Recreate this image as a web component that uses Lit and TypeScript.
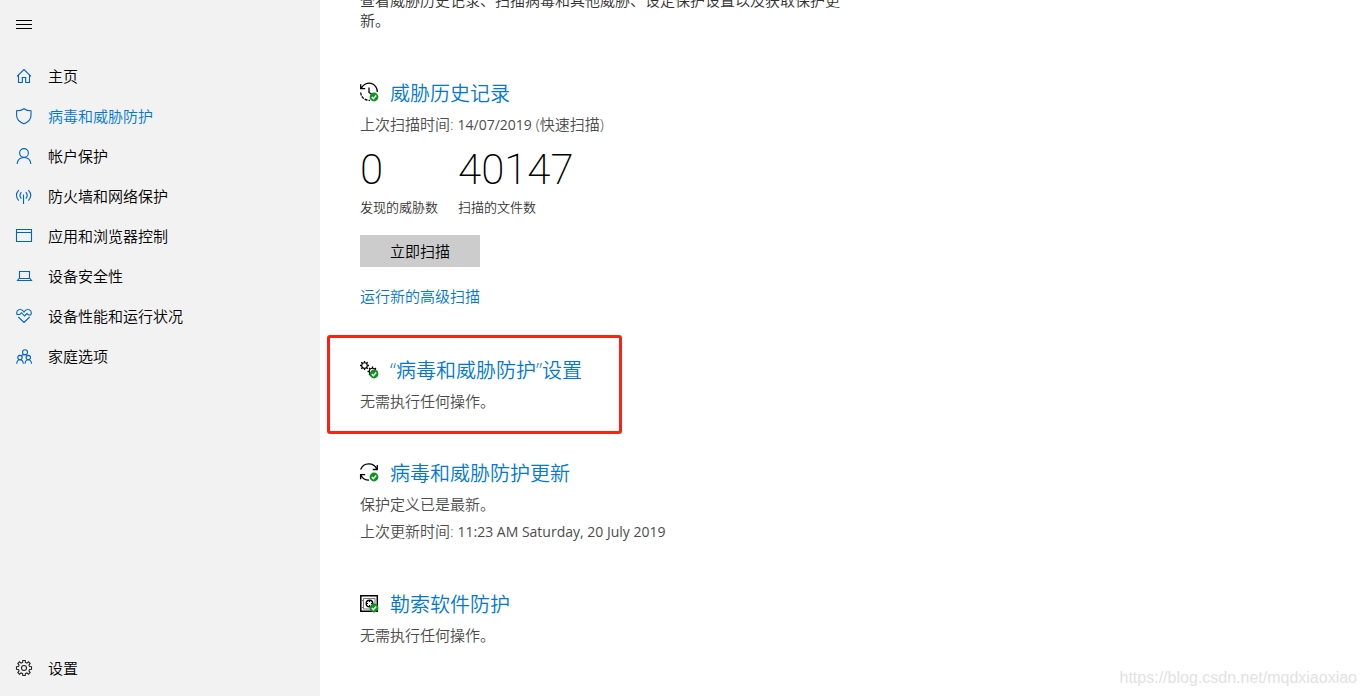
import { LitElement, html, css, svg, SVGTemplateResult } from "lit";
import { customElement, property, state } from "lit/decorators.js";

const cog = (cx: number, cy: number, r: number, teeth: number, depth: number): string => {
  const points: string[] = [];
  const step = (Math.PI * 2) / teeth;
  for (let i = 0; i < teeth; i++) {
    const a = i * step - Math.PI / 2;
    const corners: [number, number][] = [
      [-0.32, r - depth],
      [-0.2, r],
      [0.2, r],
      [0.32, r - depth],
    ];
    for (const [k, radius] of corners) {
      const t = a + k * step;
      points.push(`${(cx + Math.cos(t) * radius).toFixed(2)} ${(cy + Math.sin(t) * radius).toFixed(2)}`);
    }
  }
  return `M${points.join("L")}Z`;
};

const badge = svg`
  <circle cx="14" cy="14" r="4.400" fill="#0c9420" stroke="none"/>
  <path d="M11.800 14.100l1.600 1.600 2.800-3.200" stroke="#fff" stroke-width="1.400"/>`;

const spokes = (cx: number, cy: number, inner: number, outer: number): string => {
  let d = "";
  for (let i = 0; i < 8; i++) {
    const t = (i * Math.PI) / 4;
    d += `M${cx + Math.cos(t) * inner} ${cy + Math.sin(t) * inner}L${cx + Math.cos(t) * outer} ${cy + Math.sin(t) * outer}`;
  }
  return d;
};

const icons: Record<string, SVGTemplateResult> = {
  menu: svg`<path d="M0 4.500h16M0 8.500h16M0 12.500h16"/>`,
  home: svg`<path d="M1 8.300L8 1.600l7 6.700M2.500 7v7.500h3.800V9.500h3.400v5h3.800V7"/>`,
  shield: svg`<path d="M8 .7c2 1.500 4.500 2.100 7 2.100v4.400c0 4-2.800 6.800-7 8.600C3.300 14 .6 11.200.6 7.200V2.800C3.400 2.800 6 2.200 8 .7z"/>`,
  person: svg`<circle cx="8" cy="5" r="4.400"/><path d="M1.100 16c.4-4 3.200-6.500 6.900-6.500s6.500 2.500 6.900 6.500"/>`,
  signal: svg`<path d="M7.500 6.500V16M5.400 4.200c-1.800 2.100-1.800 4.500 0 6.500M9.800 4.200c1.800 2.100 1.800 4.500 0 6.500M2.800 2.200c-3 3.300-3 7.200 0 10.500M12.400 2.200c3 3.300 3 7.200 0 10.500"/>`,
  window: svg`<path d="M.5 1.500h15v12H.5zM.5 4.500h15"/>`,
  laptop: svg`<path d="M3.500 3.500h10v7h-10zM3 10.500l-1.500 2h14l-1.500-2"/>`,
  heart: svg`<path d="M1.200 7C-.2 3.900 1.600 1.500 4.200 1.500 6 1.500 7.200 2.500 8 4c.8-1.500 2-2.500 3.800-2.500 2.600 0 4.400 2.400 3 5.500M.5 6.500h3.300l1.700-1.800 3 3.300L11 5.600l1.500 1.400H15M2.300 9L8 14.500 13.700 9"/>`,
  family: svg`<circle cx="9" cy="4.200" r="2.500"/><circle cx="4" cy="9.600" r="2.200"/><circle cx="12.300" cy="9.600" r="2.200"/><path d="M.7 15.800c.2-2.500 1.500-4 3.300-4s3.100 1.500 3.400 4M9 15.800c.2-2.500 1.500-4 3.300-4s3 1.500 3.200 4M5.300 7.900C6 6.700 7.300 6.500 9 6.700s2.500.4 3 1.200"/>`,
  gear: svg`<path d="${cog(8, 8, 7.6, 8, 1.9)}"/><circle cx="8" cy="8" r="2.500"/>`,
  history: svg`<g stroke="#000" stroke-width="1.300"><path d="M1.500 5A8.300 8.300 0 0 1 17.300 9M.7 1.200v4.500h4.500M9 4.500v5l3 2"/><path d="M.7 9.500A8.300 8.300 0 0 0 10 17.300" stroke-dasharray="3 1"/></g>${badge}`,
  cogs: svg`<g stroke="#000"><circle cx="4.500" cy="5.500" r="2.800"/><path d="${spokes(4.5, 5.5, 2.8, 4.5)}" stroke-width="1.300"/><circle cx="12.500" cy="11.500" r="3.200"/><path d="${spokes(12.5, 11.5, 3.2, 4.9)}" stroke-width="1.300"/></g>${badge}`,
  sync: svg`<g stroke="#000" stroke-width="1.300"><path d="M.6 6.500C2 3 5 .8 8.700.8c3.500 0 6.600 2 8 5M17.300 2v4.500h-4.500M9 17.200c-3.500 0-6.600-2-8-5M.6 16.200v-4.500h4.500"/></g>${badge}`,
  safe: svg`<path d="M.8 1.800h16.500v15.500H.8z" stroke="#000" stroke-width="1.500"/><path d="M3.500 4.500h11.500v10.500H3.500zM2 6.500h1.500M2 13.500h1.500" stroke="#777" stroke-width="1"/><circle cx="9.500" cy="9.500" r="3.300" stroke="#000" stroke-width="1.400"/><path d="M9.500 6.500v1.500M9.500 11v1.500M6.500 9.500h1.500M11 9.500h1.500" stroke="#000" stroke-width="1"/>${badge}`,
};

@customElement("ui-icon")
class UiIcon extends LitElement {
  @property() name = "";
  @property({ type: Number }) box = 16;

  static styles = css`
    :host { display: block; flex: none; width: 16px; height: 16px; }
    :host([box="20"]) { width: 20px; height: 20px; }
    svg { display: block; width: 100%; height: 100%; fill: none; stroke: currentColor; stroke-width: 1.1; overflow: visible; }
  `;

  render() {
    return html`<svg viewBox="0 0 ${this.box} ${this.box}" aria-hidden="true">${icons[this.name]}</svg>`;
  }
}

@customElement("app-root")
class AppRoot extends LitElement {
  @state() private current = "shield";

  private nav = [
    ["home", "主页"],
    ["shield", "病毒和威胁防护"],
    ["person", "帐户保护"],
    ["signal", "防火墙和网络保护"],
    ["window", "应用和浏览器控制"],
    ["laptop", "设备安全性"],
    ["heart", "设备性能和运行状况"],
    ["family", "家庭选项"],
  ];

  static styles = css`
    :host {
      display: grid;
      grid-template-columns: 320px 1fr;
      height: 100vh;
      overflow: hidden;
      position: relative;
      background: #fff;
      color: #000;
      font: 350 15px/20px "Open Sans", "Noto Sans CJK SC", sans-serif;
    }
    a { color: #0078d7; text-decoration: none; }
    p, h2, dl, dd { margin: 0; }
    button { border: 0; font: inherit; color: inherit; cursor: pointer; }
    .side { display: flex; flex-direction: column; background: #f2f2f2; padding-bottom: 8px; }
    .menu { display: flex; align-items: center; width: 48px; height: 48px; padding: 0 16px; background: none; }
    .nav { display: flex; flex-direction: column; padding-top: 8px; flex: 1; }
    .item { display: flex; align-items: center; gap: 16px; height: 40px; padding: 0 16px; color: #000; }
    .item ui-icon { color: #0063c7; }
    .item.on { color: #0078d7; }
    .item.last ui-icon { color: #222; }
    .main { display: flex; flex-direction: column; gap: 48px; padding: 0 40px; color: #4c4c4c; }
    .intro { max-width: 480px; margin-top: -10px; padding-bottom: 1px; color: #333; }
    .card { display: flex; flex-direction: column; align-items: flex-start; gap: 7px; position: relative; }
    .title { display: flex; align-items: flex-start; gap: 10px; margin-bottom: -2px; font-size: 20px; line-height: 30px; font-weight: inherit; }
    .title ui-icon { color: #000; margin-top: 4px; }
    .latin { font-size: 14px; font-weight: 400; }
    .stats { display: flex; gap: 20px; padding: 6px 0 11px; }
    .stat { display: flex; flex-direction: column-reverse; gap: 5px; }
    .stat dt { font-size: 13px; color: #333; }
    .stat dd { font: 200 42px/44px Roboto, sans-serif; color: #000; }
    .scan { width: 120px; height: 32px; padding: 0; background: #ccc; color: #000; }
    .advanced { margin: 12px 0 2px; }
    .marked::after {
      content: "";
      position: absolute;
      inset: -21px auto -23px -33px;
      width: 289px;
      border: 3px solid #fc2115;
      border-radius: 3px;
      pointer-events: none;
    }
    .mark { position: absolute; right: 9px; bottom: 8px; font: 16px/20px "Liberation Sans", sans-serif; color: #e2e2e2; }
  `;

  private heading(icon: string, text: string) {
    return html`<h2 class="title"><ui-icon name=${icon} box="20"></ui-icon><a href="#">${text}</a></h2>`;
  }

  render() {
    return html`
      <aside class="side">
        <button class="menu" aria-label="菜单"><ui-icon name="menu"></ui-icon></button>
        <nav class="nav">
          ${this.nav.map(
            ([id, label]) => html`<a href="#" class="item ${id === this.current ? "on" : ""}" @click=${() => (this.current = id)}
              ><ui-icon name=${id}></ui-icon>${label}</a>`
          )}
        </nav>
        <a href="#" class="item last"><ui-icon name="gear"></ui-icon>设置</a>
      </aside>
      <main class="main">
        <p class="intro">查看威胁历史记录、扫描病毒和其他威胁、设定保护设置以及获取保护更新。</p>
        <section class="card">
          ${this.heading("history", "威胁历史记录")}
          <p>上次扫描时间: <span class="latin">14/07/2019</span> (快速扫描)</p>
          <dl class="stats">
            <div class="stat"><dt>发现的威胁数</dt><dd>0</dd></div>
            <div class="stat"><dt>扫描的文件数</dt><dd>40147</dd></div>
          </dl>
          <button class="scan">立即扫描</button>
          <a class="advanced" href="#">运行新的高级扫描</a>
        </section>
        <section class="card marked">
          ${this.heading("cogs", "“病毒和威胁防护”设置")}
          <p>无需执行任何操作。</p>
        </section>
        <section class="card">
          ${this.heading("sync", "病毒和威胁防护更新")}
          <p>保护定义已是最新。</p>
          <p>上次更新时间: <span class="latin">11:23 AM Saturday, 20 July 2019</span></p>
        </section>
        <section class="card">
          ${this.heading("safe", "勒索软件防护")}
          <p>无需执行任何操作。</p>
        </section>
      </main>
      <div class="mark">https://blog.csdn.net/mqdxiaoxiao</div>
    `;
  }
}
